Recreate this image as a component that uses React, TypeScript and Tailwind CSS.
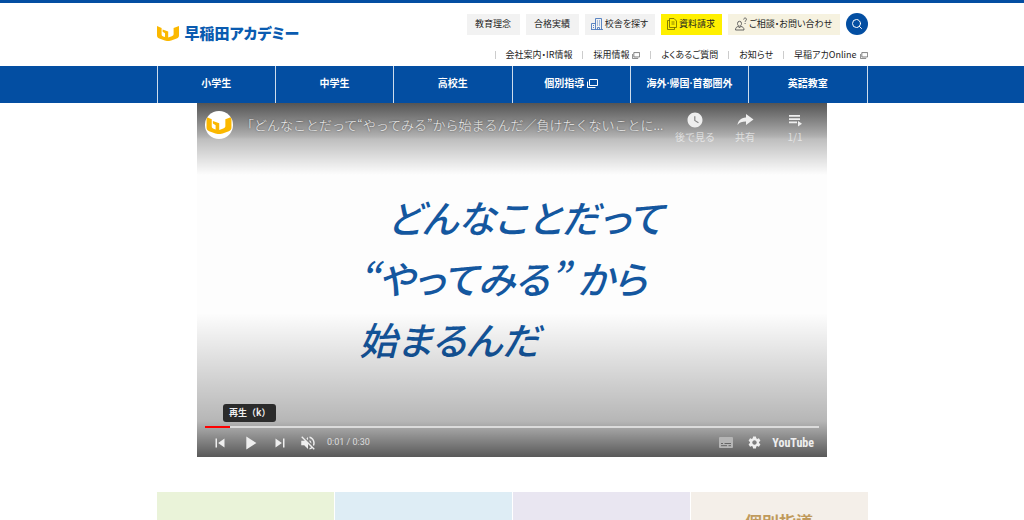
import React from "react";
import { Search } from "lucide-react";
import {
  MdPlayArrow,
  MdSettings,
  MdSkipNext,
  MdSkipPrevious,
  MdVolumeOff,
  MdWatchLater,
} from "react-icons/md";
import { clsx } from "clsx";

const WindowIcon: React.FC<{ className?: string }> = ({ className }) => (
  <svg
    viewBox="0 0 11 9"
    className={clsx("shrink-0", className)}
    fill="none"
    stroke="currentColor"
    aria-hidden="true"
  >
    <path d="M2.5 0.5h8v6h-8z" />
    <path d="M0.5 2.5v6h8" />
  </svg>
);

const BuildingIcon = () => (
  <svg
    viewBox="0 0 12 12"
    className="h-3 w-3 shrink-0"
    fill="none"
    stroke="#4a78bd"
    strokeWidth="0.9"
    aria-hidden="true"
  >
    <path d="M4.5 11.5v-11h6v11M0.5 11.5v-6h4M0 11.5h12M6.5 11.5v-2h2v2" />
    <path d="M6 3h1M8 3h1M6 5h1M8 5h1M6 7h1M8 7h1M2 7.5h1M2 9.5h1" />
  </svg>
);

const DocumentIcon = () => (
  <svg
    viewBox="0 0 10 12"
    className="h-3 w-[10px] shrink-0"
    fill="none"
    stroke="#6b6400"
    strokeWidth="0.8"
    aria-hidden="true"
  >
    <path d="M2.5 0.5h4.5l2.5 2.5v6.5h-7z" />
    <path d="M2.5 2.5h-2v9h7v-2M4.5 4h3M4.5 6h3" />
  </svg>
);

const ConsultIcon = () => (
  <svg
    viewBox="0 0 12 14"
    className="h-[14px] w-3 shrink-0"
    fill="none"
    stroke="#555"
    strokeWidth="0.9"
    aria-hidden="true"
  >
    <path d="M2.5 6.5a2 2.2 0 0 1 4 0c0 1.5-.8 2.7-2 2.7s-2-1.2-2-2.7z" />
    <path d="M3.5 9.3c-2 .6-3 1.4-3 3.7h8.5c0-2.3-1-3.1-3.5-3.7M3.5 9.5l1 1.5 1-1.5" />
    <path d="M8.7 2.5c0-2 2.8-1.8 2.8-.2 0 1.2-1.4 1.2-1.4 2.5M10.1 6v1" />
  </svg>
);

const Mark: React.FC<{ className?: string }> = ({ className }) => (
  <svg viewBox="0 0 22 15" className={className} fill="#fbb800" aria-hidden="true">
    <path d="M0 0l4.600 2v6.200c0 1.200.5 1.800 1.600 2.200l1.800.7V7.300L5.600 5.800V3.600l5.600 2v5.800l3.600-1.200c1.200-.4 1.800-1 1.800-2.200V2L22 0v9.200c0 1.700-.7 2.600-2.300 3.300l-5.500 2.100c-2.200.6-4.200.6-6.400 0l-5.500-2.100C.7 11.800 0 10.900 0 9.200z" />
  </svg>
);

const SHORTCUTS = [
  { label: "教育理念", width: "w-[53px]", tone: "bg-[#f2f2f2]", icon: null },
  { label: "合格実績", width: "w-[53px]", tone: "bg-[#f2f2f2]", icon: null },
  { label: "校舎を探す", width: "w-[70px]", tone: "bg-[#f2f2f2]", icon: <BuildingIcon /> },
  { label: "資料請求", width: "w-[61px]", tone: "bg-[#fff000]", icon: <DocumentIcon /> },
  { label: "ご相談・お問い合わせ", width: "w-[112px]", tone: "bg-[#f6f2e0]", icon: <ConsultIcon /> },
];

const SUB_LINKS = [
  { label: "会社案内・IR情報" },
  { label: "採用情報", external: true },
  { label: "よくあるご質問" },
  { label: "お知らせ" },
  { label: "早稲アカOnline", external: true },
];

const NAV_ITEMS = [
  { label: "小学生" },
  { label: "中学生" },
  { label: "高校生" },
  { label: "個別指導", external: true },
  { label: "海外·帰国·首都圏外" },
  { label: "英語教室" },
];

const CARDS = [
  { tone: "bg-[#eaf3d9]", label: "" },
  { tone: "bg-[#deedf5]", label: "" },
  { tone: "bg-[#e9e6f1]", label: "" },
  { tone: "bg-[#f4efe9]", label: "個別指導" },
];

const Header = () => (
  <header className="border-t-[3px] border-[#034ea2]">
    <div className="mx-auto flex h-[63px] max-w-[711px] justify-between">
      <a
        href="#"
        className="mt-5 flex h-5 items-center gap-1.5 text-[15px] leading-5 font-black whitespace-nowrap text-[#0a5bb0] [font-feature-settings:'palt']"
      >
        <Mark className="h-[15px] w-[22px]" />
        早稲田アカデミー
      </a>
      <div className="flex flex-col items-end pt-[10px] text-[9px] [font-feature-settings:'palt']">
        <div className="flex items-center gap-1.5">
          {SHORTCUTS.map((item) => (
            <a
              key={item.label}
              href="#"
              className={clsx(
                "flex h-[21px] items-center justify-center gap-0.5 whitespace-nowrap",
                item.width,
                item.tone
              )}
            >
              {item.icon}
              {item.label}
            </a>
          ))}
          <button
            aria-label="検索"
            className="flex h-[22px] w-[22px] items-center justify-center rounded-full bg-[#034ea2] text-white"
          >
            <Search className="h-3 w-3" strokeWidth={2} />
          </button>
        </div>
        <ul className="mt-3 flex items-center">
          {SUB_LINKS.map((link) => (
            <li key={link.label} className="group flex items-center">
              <span className="mr-[10px] h-2 w-px bg-[#ccc]" />
              <a
                href="#"
                className="mr-[10px] flex items-center gap-[3px] leading-4 whitespace-nowrap group-last:mr-0"
              >
                {link.label}
                {link.external && <WindowIcon className="h-[7px] w-2 text-[#555]" />}
              </a>
            </li>
          ))}
        </ul>
      </div>
    </div>
  </header>
);

const MainNav = () => (
  <nav className="bg-[#034ea2] font-[Roboto,'Noto_Sans_CJK_JP',sans-serif] text-white">
    <ul className="mx-auto grid max-w-[711px] grid-cols-6 border-l border-white/80">
      {NAV_ITEMS.map((item) => (
        <li key={item.label} className="border-r border-white/80">
          <a
            href="#"
            className="flex h-[37px] items-center justify-center gap-[3px] pb-0.5 text-[10px] font-bold whitespace-nowrap"
          >
            {item.label}
            {item.external && <WindowIcon className="h-[9px] w-[11px]" />}
          </a>
        </li>
      ))}
    </ul>
  </nav>
);

const Player = () => (
  <section className="relative mx-auto aspect-video max-w-[630px] overflow-hidden bg-[#fdfdfd]">
    <div className="pt-[83px] pl-[162px] text-[38px] leading-[61px] font-medium whitespace-nowrap text-[#14579f] italic [font-feature-settings:'palt']">
      <p className="pl-7">どんなことだって</p>
      <p>“やってみる” から</p>
      <p>始まるんだ</p>
    </div>

    {/* Shades behind the controls */}
    <div className="absolute inset-x-0 top-0 h-[72px] bg-linear-to-b from-[#555] via-black/25 via-50% to-transparent" />
    <div className="absolute inset-x-0 bottom-0 h-[144px] bg-linear-to-b from-transparent via-black/28 via-75% to-black/65" />

    <div className="absolute inset-x-0 top-0 flex items-start pt-2 pr-3 pl-2 text-[#eee]">
      <span className="flex h-7 w-7 shrink-0 items-center justify-center overflow-hidden rounded-full bg-white">
        <Mark className="h-[17px] w-[26px]" />
      </span>
      <a
        href="#"
        className="ml-2 flex-1 text-[13px] leading-7 font-light whitespace-nowrap [text-shadow:0_0_2px_rgb(0_0_0/50%)]"
      >
        「どんなことだって“やってみる”から始まるんだ／負けたくないことに...
      </a>
      <div className="flex shrink-0 gap-2.5 text-[10px] leading-4 text-white/60">
        <button className="flex w-10 flex-col items-center">
          <MdWatchLater className="h-[18px] w-[18px] text-[#eee]" />
          <span className="whitespace-nowrap">後で見る</span>
        </button>
        <button className="flex w-10 flex-col items-center">
          <svg viewBox="0 0 18 18" className="h-[18px] w-[18px]" fill="#eee" aria-hidden="true">
            <path d="M10 3l7.500 5.500L10 14v-3.500c-4 0-6.500.8-8.500 3.500.5-4 3-7 8.500-7.500z" />
          </svg>
          <span>共有</span>
        </button>
        <button className="flex w-10 flex-col items-center">
          <svg viewBox="0 0 18 18" className="h-[18px] w-[18px]" fill="#eee" aria-hidden="true">
            <path d="M3 4h11v1.800H3zM3 7.200h11V9H3zM3 10.400h8v1.800H3zM12 10l4 2.800-4 2.800z" />
          </svg>
          <span>1/1</span>
        </button>
      </div>
    </div>

    <div className="absolute inset-x-2 bottom-0 text-[#eee]">
      <span className="ml-[18px] inline-block rounded-[3px] bg-[#2b2b2b] px-1.5 text-[9px] leading-[18px] font-bold">
        再生（k）
      </span>
      <div className="mt-1 flex h-0.5 bg-white/60">
        <div className="w-[4%] bg-[#f00]" />
      </div>
      <div className="flex h-[29px] items-center">
        <button aria-label="前へ" className="ml-1.5">
          <MdSkipPrevious className="h-[18px] w-[18px]" />
        </button>
        <button aria-label="再生" className="ml-2.5">
          <MdPlayArrow className="h-[22px] w-[22px]" />
        </button>
        <button aria-label="次へ" className="ml-2.5">
          <MdSkipNext className="h-[18px] w-[18px]" />
        </button>
        <button aria-label="ミュート解除" className="ml-2.5">
          <MdVolumeOff className="h-[18px] w-[18px]" />
        </button>
        <span className="ml-2.5 font-[Roboto,sans-serif] text-[9px] text-[#ddd]">
          0:01 / 0:30
        </span>
        <button aria-label="字幕" className="ml-auto">
          <svg viewBox="0 0 14 11" className="h-[11px] w-[14px]" aria-hidden="true">
            <rect width="14" height="11" rx="1" fill="#b5b5b5" />
            <path
              d="M2 6.500h2M5.500 6.500H12M2 8.700h6M9.500 8.700H12"
              stroke="#666"
              strokeWidth="1"
            />
          </svg>
        </button>
        <button aria-label="設定" className="ml-3.5">
          <MdSettings className="h-[15px] w-[15px]" />
        </button>
        <a
          href="#"
          className="mr-[5px] ml-2.5 font-['Roboto_Condensed','Open_Sans_Condensed',Roboto,sans-serif] text-[12px] leading-4 font-bold"
        >
          YouTube
        </a>
      </div>
    </div>
  </section>
);

export default function App() {
  return (
    <div
      lang="ja"
      className="h-screen overflow-hidden bg-white font-['Noto_Sans_CJK_JP',sans-serif] text-[#222]"
    >
      <Header />
      <MainNav />
      <Player />
      <main className="mx-auto mt-[35px] grid max-w-[711px] grid-cols-4 gap-px">
        {CARDS.map((card) => (
          <a
            key={card.tone}
            href="#"
            className={clsx(
              "h-40 pt-[18px] text-center text-[17px] leading-6 font-bold text-[#c09a5c]",
              card.tone
            )}
          >
            {card.label}
          </a>
        ))}
      </main>
    </div>
  );
}
